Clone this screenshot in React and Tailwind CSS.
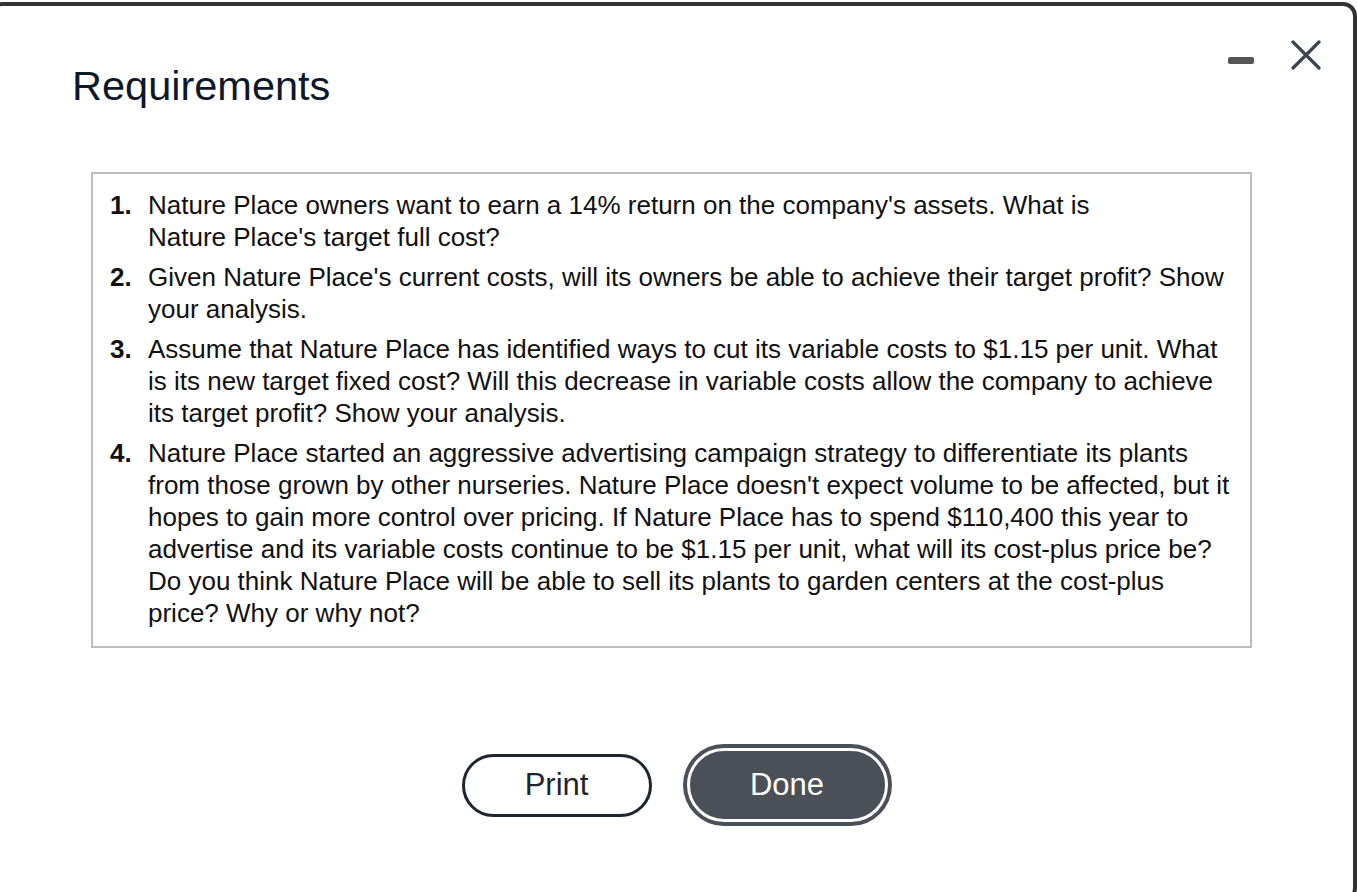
import React from 'react';

const items = [
  "Nature Place owners want to earn a 14% return on the company's assets. What is Nature\u00a0Place's target full cost?",
  "Given Nature Place's current costs, will its owners be able to achieve their target profit? Show your analysis.",
  "Assume that Nature Place has identified ways to cut its variable costs to $1.15 per unit. What is its new target fixed cost? Will this decrease in variable costs allow the company to achieve its target profit? Show your analysis.",
  "Nature Place started an aggressive advertising campaign strategy to differentiate its plants from those grown by other nurseries. Nature Place doesn't expect volume to be affected, but it hopes to gain more control over pricing. If Nature Place has to spend $110,400 this year to advertise and its variable costs continue to be $1.15 per unit, what will its cost-plus price be? Do you think Nature Place will be able to sell its plants to garden centers at the cost-plus price? Why or why not?",
];

export default function App() {
  return (
    <div
      className="w-[1357px] h-[892px] overflow-hidden bg-white"
      style={{ fontFamily: '"Liberation Sans", Arial, sans-serif' }}
    >
      <div className="ml-[-12px] mt-[2px] w-[1369px] h-[900px] border-[4px] border-[#333333] rounded-[14px] bg-white">
        <div className="flex justify-end items-center gap-[37px] pt-[36px] pr-[32px] h-[0px]">
          <div className="w-[26px] h-[7px] rounded-[2px] bg-[#555555] mt-[36px]" />
          <svg width="30" height="30" viewBox="0 0 30 30" className="mt-[26px]">
            <path d="M2 2 L28 28 M28 2 L2 28" stroke="#3d4452" strokeWidth="3.2" strokeLinecap="round" />
          </svg>
        </div>

        <h1 className="pl-[80px] pt-[20px] text-[41.5px] leading-[48px] text-[#0f172a]">Requirements</h1>

        <div className="ml-[99px] mt-[62px] w-[1161px] border-2 border-[#bdbdbd] pl-[17px] pr-[16px] pt-[15px] pb-[17px]">
          {items.map((t, i) => (
            <div key={i} className={`flex text-[26px] leading-[32px] text-[#111111] ${i > 0 ? 'mt-[8px]' : ''}`}>
              <span className="w-[38px] shrink-0 font-bold">{i + 1}.</span>
              <span className="flex-1">{t}</span>
            </div>
          ))}
        </div>

        <div className="flex justify-center items-center gap-[31px] mt-[96px] pl-[8px]">
          <button className="w-[190px] h-[63px] rounded-full border-[3px] border-[#1e2430] bg-white text-[31px] text-[#1e2430]">
            Print
          </button>
          <div className="p-[4px] rounded-full bg-[#4b4f58]">
            <button className="w-[201px] h-[74px] rounded-full border-[3px] border-white bg-[#4b4f58] text-[31px] text-white">
              Done
            </button>
          </div>
        </div>
      </div>
    </div>
  );
}
